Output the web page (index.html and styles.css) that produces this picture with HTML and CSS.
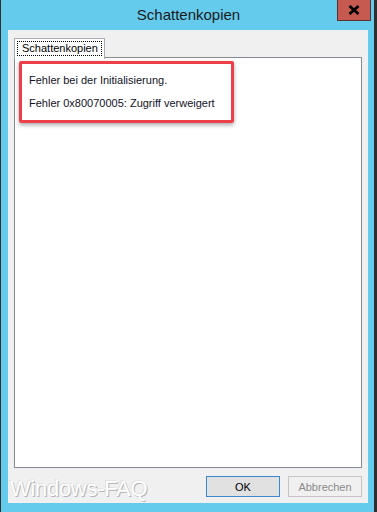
FILE: index.html
```html
<!DOCTYPE html>
<html lang="de">
<head>
<meta charset="utf-8">
<title>Schattenkopien</title>
<link rel="stylesheet" href="styles.css">
</head>
<body>
<div class="window">
  <div class="titlebar">
    <span class="title">Schattenkopien</span>
    <button class="close" aria-label="Schließen">
      <svg width="12" height="10" viewBox="0 0 12 10"><path d="M1.5 1 L10.5 9 M10.5 1 L1.5 9" stroke="#000" stroke-width="2.8" fill="none"/></svg>
    </button>
  </div>
  <div class="client">
    <div class="tabs">
      <div class="tab"><span class="focus">Schattenkopien</span></div>
    </div>
    <div class="panel">
      <div class="errorbox">
        <p>Fehler bei der Initialisierung.</p>
        <p>Fehler 0x80070005: Zugriff verweigert</p>
      </div>
    </div>
    <div class="footer">
      <span class="watermark">Windows-FAQ</span>
      <div class="buttons">
        <button class="btn default">OK</button>
        <button class="btn disabled">Abbrechen</button>
      </div>
    </div>
  </div>
</div>
</body>
</html>
```

FILE: styles.css
```css
html, body {
  margin: 0;
  padding: 0;
}
body {
  width: 377px;
  height: 512px;
  overflow: hidden;
  font-family: "Liberation Sans", Arial, sans-serif;
}
.window {
  box-sizing: border-box;
  width: 377px;
  height: 512px;
  background: #65cbed;
  border-left: 1px solid #2e2e2e;
  border-right: 3px solid #2e2e2e;
  display: flex;
  flex-direction: column;
}
.titlebar {
  position: relative;
  height: 30px;
  flex: none;
  display: flex;
  justify-content: center;
}
.title {
  font-size: 15px;
  color: #1a1a1a;
  line-height: 30px;
  margin-left: 2px;
}
.close {
  position: absolute;
  top: 0;
  right: 3px;
  width: 34px;
  height: 21px;
  padding: 0;
  margin: 0;
  border: 1px solid #5a3232;
  border-top: none;
  background: #c75a50;
  display: flex;
  align-items: center;
  justify-content: center;
  box-sizing: border-box;
}
.client {
  flex: 1;
  margin: 0 6px 9px 7px;
  background: #f0f0f0;
  padding: 8px 6px 6px 6px;
  display: flex;
  flex-direction: column;
  box-sizing: border-box;
}
.tabs {
  display: flex;
  height: 20px;
  flex: none;
  position: relative;
  z-index: 1;
  margin-bottom: -1px;
}
.tab {
  box-sizing: border-box;
  width: 91px;
  height: 21px;
  background: #ffffff;
  border: 1px solid #a9acb3;
  border-bottom: none;
  padding: 2px 2px 0 2px;
}
.focus {
  display: block;
  box-sizing: border-box;
  height: 15px;
  border: 1px dotted #000;
  font-size: 11px;
  line-height: 13px;
  color: #000;
  padding-left: 4px;
  white-space: nowrap;
}
.panel {
  box-sizing: border-box;
  height: 411px;
  flex: none;
  background: #ffffff;
  border: 1px solid #868a92;
  padding: 3px 4px;
}
.errorbox {
  box-sizing: border-box;
  width: 215px;
  height: 62px;
  border: 3px solid #ec3f48;
  border-radius: 2px;
  box-shadow: 0 2px 4px rgba(0, 0, 0, 0.35);
  padding: 10px 7px 0 7px;
}
.errorbox p {
  margin: 0 0 10px 0;
  font-size: 11px;
  line-height: 13px;
  color: #121226;
  white-space: nowrap;
}
.footer {
  margin-top: 8px;
  display: flex;
  align-items: center;
  justify-content: space-between;
  height: 21px;
}
.watermark {
  margin-left: -4px;
  font-size: 22px;
  line-height: 21px;
  letter-spacing: -0.3px;
  color: #ffffff;
  text-shadow: 1px 1px 0 #b4b4b4, -1px -1px 0 #e2e2e2;
  margin-top: 3px;
}
.buttons {
  display: flex;
  gap: 8px;
}
.btn {
  box-sizing: border-box;
  width: 74px;
  height: 21px;
  margin: 0;
  padding: 0;
  font-family: "Liberation Sans", Arial, sans-serif;
  font-size: 11px;
  border-radius: 0;
}
.default {
  background: #e1e1e1;
  border: 1px solid #3a86cf;
  color: #000;
}
.disabled {
  background: #f0f0f0;
  border: 1px solid #c4c4c4;
  color: #8a8a8a;
}
```
